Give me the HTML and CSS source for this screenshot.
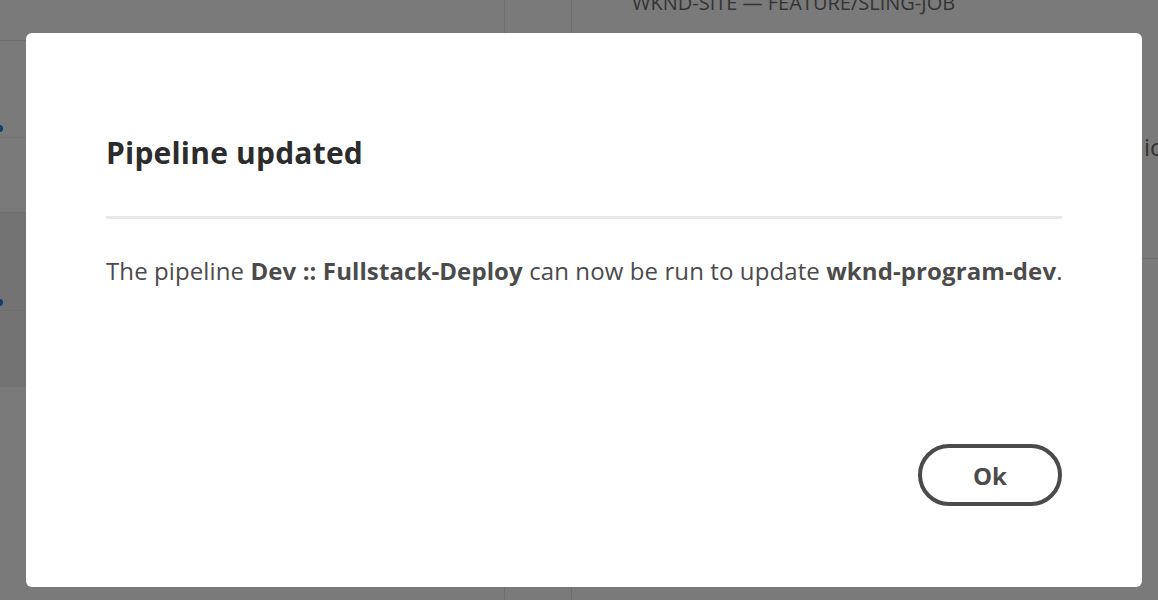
FILE: index.html
```html
<!DOCTYPE html>
<html>
<head>
<meta charset="utf-8">
<link rel="stylesheet" href="styles.css">
</head>
<body>
<div class="page">
  <div class="col col-left">
    <div class="row r1"></div>
    <div class="row r2"><span class="dot"></span></div>
    <div class="row r3"></div>
    <div class="row r4 sel"><span class="dot"></span></div>
    <div class="row r5 sel"></div>
    <div class="row r6"></div>
  </div>
  <div class="col col-mid"></div>
  <div class="col col-right">
    <div class="branch">WKND-SITE — FEATURE/SLING-JOB</div>
    <div class="rrow"><span class="cut">ic</span></div>
  </div>
</div>
<div class="overlay"></div>
<div class="dialog" role="dialog">
  <h2 class="title">Pipeline updated</h2>
  <hr class="divider">
  <p class="message">The pipeline <b>Dev :: Fullstack-Deploy</b> can now be run to update <b>wknd-program-dev</b>.</p>
  <div class="actions">
    <button class="btn">Ok</button>
  </div>
</div>
</body>
</html>
```

FILE: styles.css
```css
* { box-sizing: border-box; }
html, body { margin: 0; padding: 0; }
body {
  width: 1158px;
  height: 600px;
  overflow: hidden;
  font-family: "Open Sans", "Liberation Sans", sans-serif;
  background: #ffffff;
}
.page {
  display: flex;
  height: 600px;
}
.col { height: 100%; }
.col-left {
  flex: 0 0 505px;
  border-right: 1px solid #e5e5e5;
  display: flex;
  flex-direction: column;
}
.row { border-bottom: 1px solid #e5e5e5; position: relative; }
.r1 { height: 41px; }
.r2 { height: 97px; border-bottom-color: #f0f0f0; }
.r3 { height: 75px; }
.r4 { height: 98px; }
.r5 { height: 76px; border-bottom: none; }
.r6 { flex: 1; border-bottom: none; }
.sel { background: #f0f0f0; }
.dot {
  position: absolute;
  left: -4px;
  top: 84px;
  width: 7px;
  height: 7px;
  border-radius: 50%;
  background: #2680eb;
}
.r4 .dot { top: 86px; }
.col-mid {
  flex: 0 0 67px;
  border-right: 1px solid #e5e5e5;
}
.col-right {
  flex: 1 1 auto;
  min-width: 0;
  display: flex;
  flex-direction: column;
}
.branch {
  height: 41px;
  padding-left: 60px;
  margin-top: -11px;
  font-size: 20px;
  line-height: 27px;
  color: #6e6e6e;
  white-space: nowrap;
}
.rrow {
  height: 229px;
  border-bottom: 1px solid #e5e5e5;
  padding-top: 101px;
  padding-left: 572px;
  font-size: 24px;
  line-height: 32px;
  color: #6e6e6e;
  white-space: nowrap;
  overflow: hidden;
}
.overlay {
  position: fixed;
  inset: 0;
  background: rgba(0, 0, 0, 0.52);
}
.dialog {
  position: fixed;
  left: 26px;
  top: 33px;
  width: 1116px;
  height: 554px;
  background: #ffffff;
  border-radius: 6px;
  padding: 100px 80px 0 80px;
  display: flex;
  flex-direction: column;
}
.title {
  margin: 0;
  font-size: 30px;
  line-height: 40px;
  font-weight: 700;
  color: #2c2c2c;
  letter-spacing: 0.2px;
}
.divider {
  margin: 43px 0 0 0;
  border: none;
  height: 3px;
  background: #e8e8e8;
}
.message {
  margin: 36px 0 0 0;
  font-size: 24px;
  line-height: 32px;
  color: #4b4b4b;
  letter-spacing: 0.1px;
  white-space: nowrap;
}
.message b { font-weight: 700; color: #4b4b4b; }
.actions {
  margin-top: auto;
  margin-bottom: 81px;
  display: flex;
  justify-content: flex-end;
}
.btn {
  width: 144px;
  height: 62px;
  border: 4px solid #4b4b4b;
  border-radius: 31px;
  background: #ffffff;
  font-family: "Open Sans", "Liberation Sans", sans-serif;
  font-size: 24px;
  font-weight: 700;
  color: #4b4b4b;
  padding: 0;
}
```
